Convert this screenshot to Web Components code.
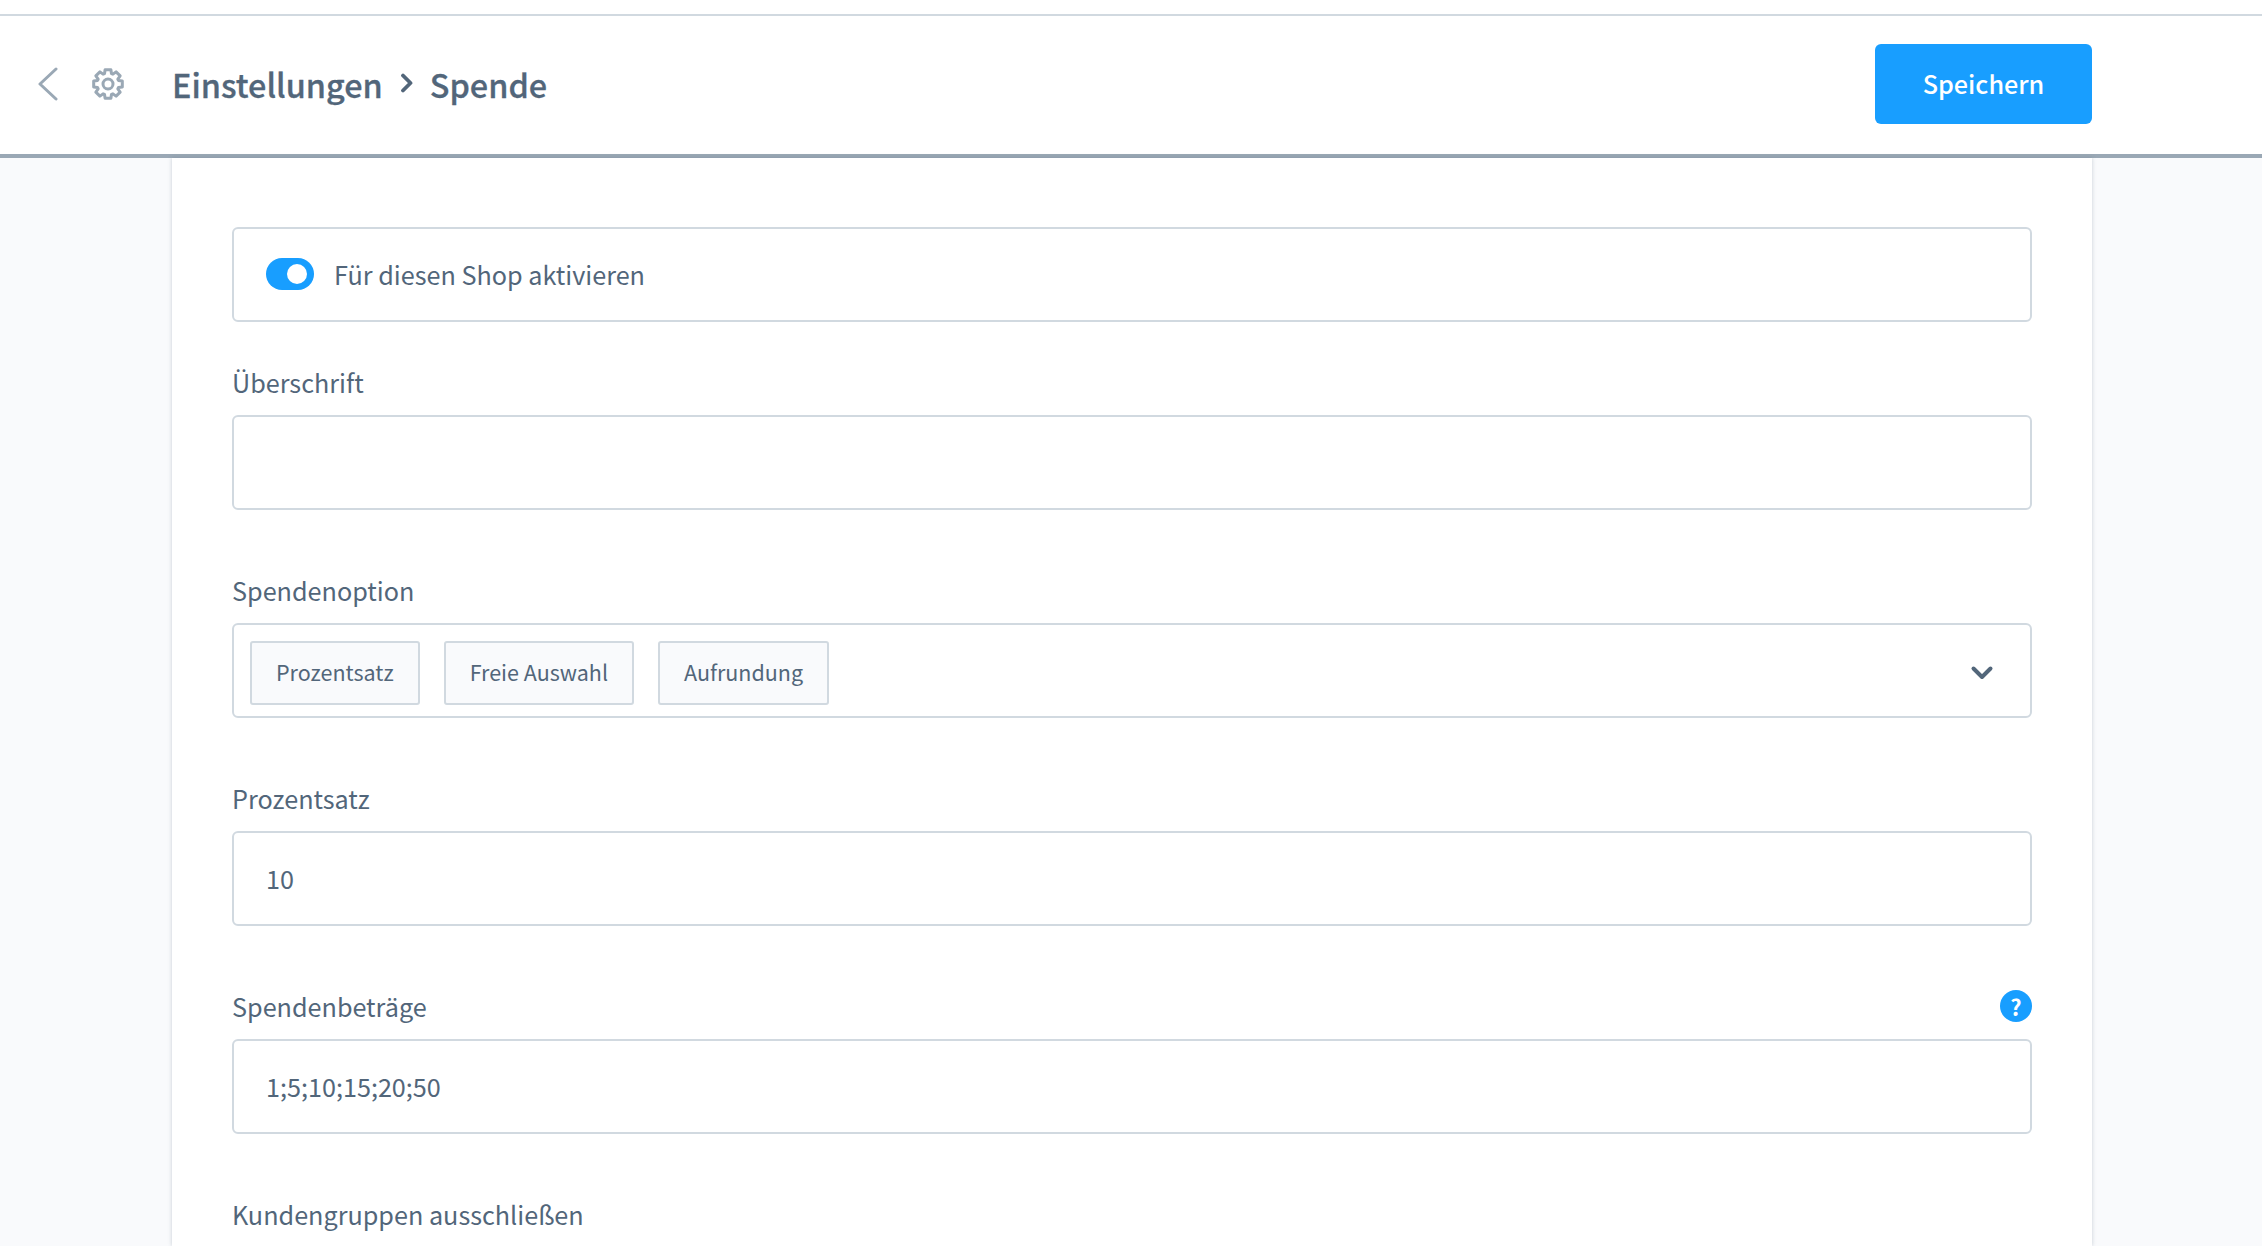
<!DOCTYPE html>
<html lang="de">
<head>
<meta charset="utf-8">
<title>Spende</title>
<style>
    html, body { margin: 0; height: 100%; overflow: hidden; }
    body {
        background: #f9fafc;
        color: #52667a;
        font-family: "Noto Sans CJK SC", "Noto Sans", sans-serif;
    }
</style>
</head>
<body>
<app-header current="Spende" parent="Einstellungen" action="Speichern"></app-header>
<settings-card>
    <switch-box>Für diesen Shop aktivieren</switch-box>
    <form-field label="Überschrift"><text-box></text-box></form-field>
    <form-field label="Spendenoption">
        <select-box>
            <option-chip>Prozentsatz</option-chip>
            <option-chip>Freie Auswahl</option-chip>
            <option-chip>Aufrundung</option-chip>
        </select-box>
    </form-field>
    <form-field label="Prozentsatz"><text-box>10</text-box></form-field>
    <form-field label="Spendenbeträge" help><text-box>1;5;10;15;20;50</text-box></form-field>
    <form-field label="Kundengruppen ausschließen"></form-field>
</settings-card>

<script>
function gearPath() {
    // 8 blocky teeth round a 16,16 centre
    let d = '';
    const step = Math.PI / 4;
    const pt = (r, a) => (16 + r * Math.cos(a)).toFixed(2) + ' ' + (16 + r * Math.sin(a)).toFixed(2);
    for (let i = 0; i < 8; i++) {
        const a = i * step;
        d += (i ? 'L' : 'M') + pt(11, a - 0.32) + 'L' + pt(14.6, a - 0.2) + 'L' + pt(14.6, a + 0.2) + 'L' + pt(11, a + 0.32);
    }
    return d + 'Z';
}

class AppHeader extends HTMLElement {
    constructor() {
        super();
        this.attachShadow({ mode: 'open' });
        this.shadowRoot.innerHTML = `
            <style>
                :host {
                    display: block;
                    background: #fff;
                    padding-top: 14px;
                }
                .bar {
                    display: flex;
                    align-items: center;
                    height: 136px;
                    padding: 0 170px 2px 0;
                    border-top: 2px solid #d1d9e0;
                    border-bottom: 4px solid #9aa8b5;
                }
                .back { margin-left: 38px; width: 20px; height: 34px; }
                .gear { margin-left: 34px; width: 32px; height: 32px; }
                .crumbs {
                    display: flex;
                    align-items: center;
                    margin-left: 48px;
                    flex: 1;
                    font-size: 32.4px;
                    font-weight: 500;
                    line-height: 44px;
                    -webkit-text-stroke: 0.3px currentColor;
                }
                .sep { margin: -3px 17px 0; width: 13px; height: 20px; }
                button {
                    width: 217px;
                    height: 80px;
                    border: 0;
                    border-radius: 6px;
                    background: #189eff;
                    color: #fff;
                    font: 500 25.2px/1 "Noto Sans CJK SC", "Noto Sans", sans-serif;
                    padding: 0;
                }
            </style>
            <div class="bar">
                <svg class="back" viewBox="0 0 20 34" fill="none" stroke="#9aa8b5" stroke-width="3" stroke-linecap="round" stroke-linejoin="round"><path d="M18 2 2 17l16 15"/></svg>
                <svg class="gear" viewBox="0 0 32 32" fill="none" stroke="#9aa8b5" stroke-width="3" stroke-linejoin="round"><path d="${gearPath()}"/><circle cx="16" cy="16" r="5"/></svg>
                <div class="crumbs">
                    <span>${this.getAttribute('parent')}</span>
                    <svg class="sep" viewBox="0 0 13 20" fill="none" stroke="#52667a" stroke-width="3.8" stroke-linecap="round" stroke-linejoin="round"><path d="M3 2.500l7.500 7.500-7.500 7.500"/></svg>
                    <span>${this.getAttribute('current')}</span>
                </div>
                <button>${this.getAttribute('action')}</button>
            </div>
        `;
    }
}

class SettingsCard extends HTMLElement {
    constructor() {
        super();
        this.attachShadow({ mode: 'open' });
        this.shadowRoot.innerHTML = `
            <style>
                :host {
                    display: block;
                    box-sizing: border-box;
                    width: 1920px;
                    height: 1088px;
                    margin-left: 172px;
                    padding: 69px 60px 0;
                    background: #fff;
                    box-shadow: 0 0 4px rgba(82, 102, 122, .3);
                }
            </style>
            <slot></slot>
        `;
    }
}

const boxStyle = `
    box-sizing: border-box;
    height: 95px;
    border: 2px solid #d1d9e0;
    border-radius: 6px;
    background: #fff;
    font-size: 25.2px;
    line-height: 36px;
`;

class SwitchBox extends HTMLElement {
    constructor() {
        super();
        this.attachShadow({ mode: 'open' });
        this.shadowRoot.innerHTML = `
            <style>
                :host {
                    display: flex;
                    align-items: center;
                    gap: 20px;
                    padding: 0 0 2px 32px;
                    margin-bottom: 42px;
                    ${boxStyle}
                }
                .track {
                    display: flex;
                    justify-content: flex-end;
                    align-items: center;
                    box-sizing: border-box;
                    width: 48px;
                    height: 32px;
                    margin-top: 1px;
                    padding-right: 7px;
                    border-radius: 16px;
                    background: #189eff;
                }
                .knob { width: 20px; height: 20px; border-radius: 50%; background: #fff; }
            </style>
            <span class="track"><span class="knob"></span></span>
            <slot></slot>
        `;
    }
}

class FormField extends HTMLElement {
    constructor() {
        super();
        this.attachShadow({ mode: 'open' });
        const help = this.hasAttribute('help')
            ? '<help-icon></help-icon>'
            : '';
        this.shadowRoot.innerHTML = `
            <style>
                :host { display: block; margin-bottom: 62px; }
                .head {
                    display: flex;
                    justify-content: space-between;
                    align-items: center;
                    height: 36px;
                    margin-bottom: 15px;
                    font-size: 25.2px;
                    line-height: 36px;
                }
            </style>
            <div class="head"><span>${this.getAttribute('label')}</span>${help}</div>
            <slot></slot>
        `;
    }
}

class HelpIcon extends HTMLElement {
    constructor() {
        super();
        this.attachShadow({ mode: 'open' });
        this.shadowRoot.innerHTML = `
            <style>
                :host {
                    display: flex;
                    justify-content: center;
                    align-items: center;
                    width: 32px;
                    height: 32px;
                    border-radius: 50%;
                    background: #189eff;
                    color: #fff;
                    font-size: 22px;
                    font-weight: 700;
                    line-height: 32px;
                }
            </style>
            ?
        `;
    }
}

class TextBox extends HTMLElement {
    constructor() {
        super();
        this.attachShadow({ mode: 'open' });
        this.shadowRoot.innerHTML = `
            <style>
                :host {
                    display: flex;
                    align-items: center;
                    padding: 0 0 2px 32px;
                    ${boxStyle}
                }
            </style>
            <slot></slot>
        `;
    }
}

class SelectBox extends HTMLElement {
    constructor() {
        super();
        this.attachShadow({ mode: 'open' });
        this.shadowRoot.innerHTML = `
            <style>
                :host {
                    display: flex;
                    align-items: center;
                    padding: 4px 36px 0 16px;
                    ${boxStyle}
                }
                .chips { display: flex; flex: 1; gap: 24px; }
                svg { width: 24px; height: 16px; }
            </style>
            <div class="chips"><slot></slot></div>
            <svg viewBox="0 0 24 16" fill="none" stroke="#52667a" stroke-width="4" stroke-linecap="round" stroke-linejoin="round"><path d="M3.5 3.5 12 12l8.500-8.500"/></svg>
        `;
    }
}

class OptionChip extends HTMLElement {
    constructor() {
        super();
        this.attachShadow({ mode: 'open' });
        this.shadowRoot.innerHTML = `
            <style>
                :host {
                    display: flex;
                    align-items: center;
                    box-sizing: border-box;
                    height: 64px;
                    padding: 0 24px 2px;
                    border: 2px solid #d1d9e0;
                    border-radius: 3px;
                    background: #f9fafc;
                    font-size: 21.5px;
                    line-height: 32px;
                }
            </style>
            <slot></slot>
        `;
    }
}

customElements.define('app-header', AppHeader);
customElements.define('settings-card', SettingsCard);
customElements.define('switch-box', SwitchBox);
customElements.define('help-icon', HelpIcon);
customElements.define('form-field', FormField);
customElements.define('text-box', TextBox);
customElements.define('select-box', SelectBox);
customElements.define('option-chip', OptionChip);
</script>
</body>
</html>
